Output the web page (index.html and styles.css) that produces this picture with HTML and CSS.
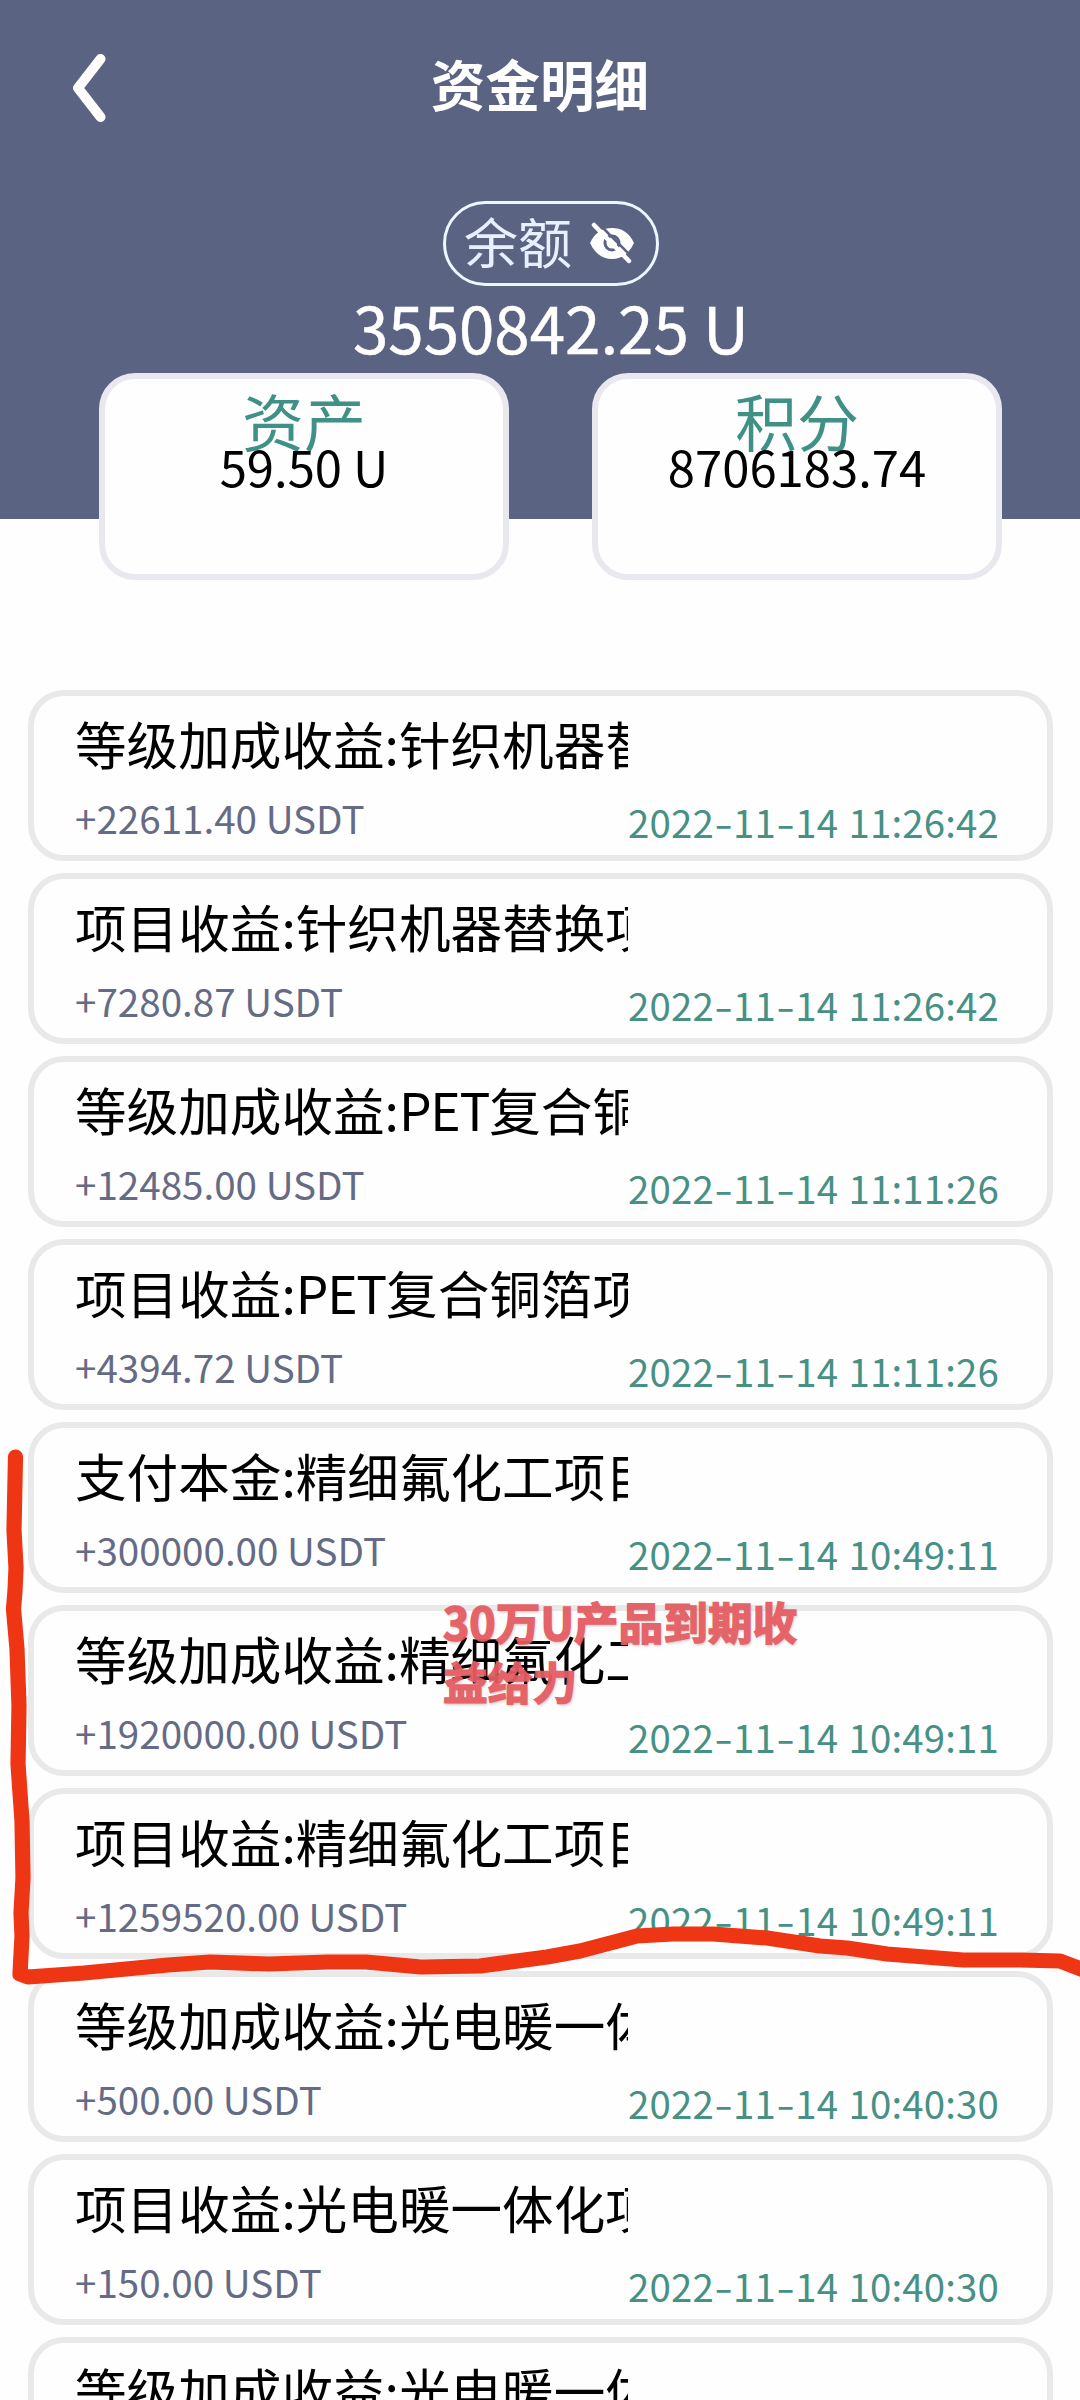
FILE: index.html
```html
<!DOCTYPE html>
<html lang="zh-CN">
<head>
<meta charset="utf-8">
<title>资金明细</title>
<link rel="stylesheet" href="styles.css">
</head>
<body>
<div class="screen">
  <header class="header">
    <div class="navbar">
      <svg class="back" width="40" height="76" viewBox="0 0 40 76"><path d="M31.5 9 L9 38 L31.5 67" fill="none" stroke="#fff" stroke-width="10" stroke-linecap="round" stroke-linejoin="round"/></svg>
      <h1 class="title">资金明细</h1>
    </div>
    <div class="balance">
      <div class="pill">
        <span>余额</span>
        <svg class="eye" width="46" height="42" viewBox="0 0 46 42">
          <path d="M1 21 C6 10 14 6 23 6 C32 6 40 10 45 21 C40 32 32 37 23 37 C14 37 6 32 1 21 Z" fill="#fff"/>
          <circle cx="23" cy="21" r="7" fill="none" stroke="#5a6482" stroke-width="3"/>
          <path d="M9 1 L45 37" stroke="#5a6482" stroke-width="2.5"/>
          <path d="M5 3 L40 39" stroke="#fff" stroke-width="4.5" stroke-linecap="round"/>
        </svg>
      </div>
      <div class="total">3550842.25 U</div>
    </div>
  </header>
  <section class="cards">
    <div class="card"><div class="card-label">资产</div><div class="card-value">59.50 U</div></div>
    <div class="card"><div class="card-label">积分</div><div class="card-value">8706183.74</div></div>
  </section>
  <main class="list">
    <div class="row"><div class="name">等级加成收益:针织机器替换项目</div><div class="amount">+22611.40 USDT</div><div class="date">2022<i>-</i>11<i>-</i>14 11:26:42</div></div>
    <div class="row"><div class="name">项目收益:针织机器替换项目</div><div class="amount">+7280.87 USDT</div><div class="date">2022<i>-</i>11<i>-</i>14 11:26:42</div></div>
    <div class="row"><div class="name">等级加成收益:<span class="latin">PET</span>复合铜箔项目</div><div class="amount">+12485.00 USDT</div><div class="date">2022<i>-</i>11<i>-</i>14 11:11:26</div></div>
    <div class="row"><div class="name">项目收益:<span class="latin">PET</span>复合铜箔项目</div><div class="amount">+4394.72 USDT</div><div class="date">2022<i>-</i>11<i>-</i>14 11:11:26</div></div>
    <div class="row"><div class="name">支付本金:精细氟化工项目</div><div class="amount">+300000.00 USDT</div><div class="date">2022<i>-</i>11<i>-</i>14 10:49:11</div></div>
    <div class="row"><div class="name">等级加成收益:精细氟化工项目</div><div class="amount">+1920000.00 USDT</div><div class="date">2022<i>-</i>11<i>-</i>14 10:49:11</div></div>
    <div class="row"><div class="name">项目收益:精细氟化工项目</div><div class="amount">+1259520.00 USDT</div><div class="date">2022<i>-</i>11<i>-</i>14 10:49:11</div></div>
    <div class="row"><div class="name">等级加成收益:光电暖一体化项目</div><div class="amount">+500.00 USDT</div><div class="date">2022<i>-</i>11<i>-</i>14 10:40:30</div></div>
    <div class="row"><div class="name">项目收益:光电暖一体化项目</div><div class="amount">+150.00 USDT</div><div class="date">2022<i>-</i>11<i>-</i>14 10:40:30</div></div>
    <div class="row"><div class="name">等级加成收益:光电暖一体化项目</div></div>
  </main>
  <div class="note">30万U产品到期收<br>益给力</div>
  <svg class="marker" width="1080" height="2400" viewBox="0 0 1080 2400"><path d="M15.5 1457 L14 1530 L16 1568 L15 1591 L13.5 1609 L17 1649 L19 1706 L18 1764 L22 1821 L23 1878 L21 1913 L22 1936 L20 1974 L28 1977 L84 1973 L168 1965 L210 1962 L269 1964 L328 1962 L366 1962 L421 1967 L480 1966 L547 1957 L580 1951 L637 1936 L673 1934 L713 1934 L767 1938 L820 1946 L847 1948 L887 1954 L963 1960 L1020 1960 L1060 1961 L1086 1971" fill="none" stroke="#ef3614" stroke-width="15.2" stroke-linecap="round" stroke-linejoin="round"/></svg>
</div>
</body>
</html>
```
FILE: styles.css
```css
* { box-sizing: border-box; }
body { margin: 0; background: #fefefe; font-family: "Noto Sans CJK SC", "Noto Sans", sans-serif; color: #000; }
.screen { position: relative; width: 1080px; height: 2400px; overflow: hidden; }
.header { height: 519px; background: #5a6482; color: #fff; }
.navbar { height: 201px; padding: 50px 0 0 69px; display: grid; grid-template-columns: 40px 862px; align-items: start; }
.title { margin: 0; padding-top: 2px; font-size: 54.6px; line-height: 62px; font-weight: 700; text-align: center; }
.balance { display: flex; flex-direction: column; align-items: center; padding-left: 22px; }
.pill { width: 216px; height: 85px; border: 3px solid #eef6ff; border-radius: 43px; display: flex; align-items: center; padding-left: 18px; gap: 17px; font-size: 54px; line-height: 70px; color: #e8efff; }
.pill span { margin-top: -5px; }
.eye { margin-top: -1px; }
.total { margin-top: 5px; font-size: 63.7px; line-height: 70px; white-space: pre; -webkit-text-stroke: .5px #fff; }
.cards { margin-top: -146px; padding-left: 99px; display: flex; gap: 83px; }
.card { width: 410px; height: 207px; border: 6px solid #e8e8ee; border-radius: 36px; background: #fefefe; padding-top: 18px; text-align: center; }
.card-label { font-size: 62px; line-height: 46px; color: #3f9185; }
.card-value { font-size: 49px; line-height: 46px; }
.list { margin: 110px 27px 0 28px; display: flex; flex-direction: column; gap: 12px; }
.row { flex: none; height: 171px; border: 6px solid #e9e9e9; border-radius: 36px; padding: 17px 0 0 41px; display: grid; grid-template-columns: 553px 1fr; grid-template-rows: 60px 50px; row-gap: 19px; align-content: start; white-space: nowrap; }
.name { grid-column: 1; overflow: hidden; font-size: 51.6px; line-height: 60px; }
.latin { letter-spacing: -1.2px; }
.amount { grid-column: 1; grid-row: 2; font-size: 38.6px; line-height: 50px; color: #666b85; }
.date { grid-column: 2; grid-row: 2; margin-top: 4px; font-size: 38.4px; line-height: 50px; letter-spacing: .18px; word-spacing: 1.5px; color: #479084; }
.date i { display: inline-block; margin: 0 2.8px; font-style: normal; transform: scaleX(1.4); }
.note { position: absolute; left: 443px; top: 1591px; font-size: 44.7px; line-height: 60px; font-weight: 700; color: #e45c62; -webkit-text-stroke: 1.6px #e45c62; opacity: .95; text-shadow: 1px 2px 3px rgba(120, 80, 80, .35); }
.marker { position: absolute; left: 0; top: 0; }
```
